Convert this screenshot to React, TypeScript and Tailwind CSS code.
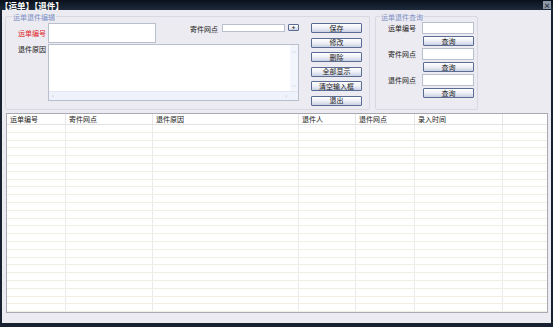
import React from "react";

const font = { fontFamily: '"Noto Sans CJK SC", "Noto Sans", sans-serif' };

function Btn({ label, className = "" }: { label: string; className?: string }) {
  return (
    <div
      className={`flex items-center justify-center rounded-[1px] border border-[#5a6c94] bg-gradient-to-b from-[#ffffff] via-[#eef0f7] to-[#c9d0e2] text-[7px] leading-none text-[#1a1a1a] ${className}`}
    >
      {label}
    </div>
  );
}

function Field({ className = "" }: { className?: string }) {
  return <div className={`border border-[#b9bfcc] bg-white ${className}`} />;
}

const columns = [
  { label: "运单编号", w: "w-[59px]" },
  { label: "寄件网点", w: "w-[87px]" },
  { label: "退件原因", w: "w-[146px]" },
  { label: "退件人", w: "w-[57px]" },
  { label: "退件网点", w: "w-[59px]" },
  { label: "录入时间", w: "w-[88px]" },
  { label: "", w: "flex-1" },
];

const rows = Array.from({ length: 24 });

export default function App() {
  return (
    <div className="flex h-[327px] w-[553px] flex-col bg-[#18212f]" style={font}>
      {/* Title bar */}
      <div className="flex h-[10px] items-center justify-between bg-gradient-to-b from-[#0a111c] to-[#1d2a3b]">
        <span className="text-[8.5px] font-bold leading-[10px] text-white">【运单】【退件】</span>
        <div className="mr-[2px] flex h-[8px] w-[8px] items-center justify-center bg-[#8d98a8] text-[7px] font-bold leading-none text-[#1b2430]">
          ×
        </div>
      </div>

      {/* Body */}
      <div className="mx-[2px] mb-[4px] flex flex-1 flex-col bg-[#ecebf1]">
        <div className="flex pt-[6px]">
          {/* Edit group */}
          <div className="relative ml-[3px] h-[94px] w-[365px] rounded-[2px] border border-[#d9d7e0]">
            <span className="absolute left-[6px] top-[-3px] bg-[#ecebf1] px-[1px] text-[7px] leading-none text-[#7d90c4]">
              运单退件编辑
            </span>
            <div className="flex pt-[6px]">
              <div className="flex w-[301px] flex-col gap-[1px]">
                <div className="flex items-start">
                  <span className="mt-[7px] w-[40px] text-right text-[7px] leading-none text-[#e0252a]">运单编号</span>
                  <Field className="ml-[2px] h-[20px] w-[108px]" />
                  <span className="ml-[34px] mt-[3px] text-[7px] leading-none text-[#222]">寄件网点</span>
                  <Field className="ml-[4px] mt-[1px] h-[8px] w-[63px]" />
                  <Btn label="+" className="ml-[3px] mt-[1px] h-[7px] w-[11px] !text-[6px] font-bold" />
                </div>
                <div className="flex items-start">
                  <span className="mt-[2px] w-[40px] text-right text-[7px] leading-none text-[#222]">退件原因</span>
                  <div className="ml-[2px] flex h-[57px] w-[251px] flex-col border border-[#b9bfcc] bg-white">
                    <div className="flex flex-1">
                      <div className="flex-1" />
                      <div className="flex w-[8px] flex-col items-center justify-between bg-[#f2f5fb] py-[2px] text-[5px] leading-none text-[#a8b4cc]">
                        <span>︿</span>
                        <span>﹀</span>
                      </div>
                    </div>
                    <div className="flex h-[9px] items-center justify-between border-t border-[#e1e6f0] bg-[#eef2fa] pl-[3px] pr-[11px] text-[6px] leading-none text-[#a8b4cc]">
                      <span>‹</span>
                      <span>›</span>
                    </div>
                  </div>
                </div>
              </div>
              <div className="ml-[4px] flex flex-col gap-[4.6px]">
                <Btn label="保存" className="h-[10px] w-[51px]" />
                <Btn label="修改" className="h-[10px] w-[51px]" />
                <Btn label="删除" className="h-[10px] w-[51px]" />
                <Btn label="全部显示" className="h-[10px] w-[51px]" />
                <Btn label="清空输入框" className="h-[10px] w-[51px]" />
                <Btn label="退出" className="h-[10px] w-[51px]" />
              </div>
            </div>
          </div>

          {/* Query group */}
          <div className="relative ml-[5px] h-[94px] w-[103px] rounded-[2px] border border-[#d9d7e0]">
            <span className="absolute left-[4px] top-[-3px] bg-[#ecebf1] px-[1px] text-[7px] leading-none text-[#7d90c4]">
              运单退件查询
            </span>
            <div className="flex flex-col pt-[5px]">
              {["运单编号", "寄件网点", "退件网点"].map((l, i) => (
                <div key={l} className={`flex flex-col ${i > 0 ? "mt-[2px]" : ""}`}>
                  <div className="flex items-center">
                    <span className="w-[40px] text-right text-[7px] leading-none text-[#222]">{l}</span>
                    <Field className="ml-[6px] h-[12px] w-[52px]" />
                  </div>
                  <Btn label="查询" className="ml-[47px] mt-[2px] h-[10px] w-[51px]" />
                </div>
              ))}
            </div>
          </div>
        </div>

        {/* Grid */}
        <div className="ml-[4px] mr-[3px] mt-[3px] flex h-[200px] flex-col border border-[#a9a9b3] bg-white">
          <div className="flex h-[11px] border-b border-[#e2e2e2]">
            {columns.map((c, i) => (
              <div
                key={i}
                className={`${c.w} flex items-center border-r border-[#e6e6e6] pl-[3px] text-[7px] leading-none text-[#222] last:border-r-0`}
              >
                {c.label}
              </div>
            ))}
          </div>
          <div className="flex flex-1 flex-col overflow-hidden">
            {rows.map((_, r) => (
              <div key={r} className="flex h-[7.8px] shrink-0 border-b border-[#f1eee4]">
                {columns.map((c, i) => (
                  <div key={i} className={`${c.w} border-r border-[#ebebeb] last:border-r-0`} />
                ))}
              </div>
            ))}
          </div>
        </div>
      </div>
    </div>
  );
}
